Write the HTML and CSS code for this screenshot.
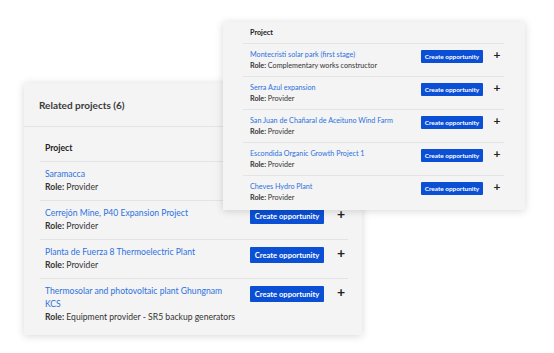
FILE: index.html
```html
<!DOCTYPE html>
<html lang="en">

<head>
  <meta charset="UTF-8" />
  <meta name="viewport" content="width=device-width, initial-scale=1.0" />
  <link rel="stylesheet" href="styles.css">
  <title>Related projects</title>
</head>

<body>
  <div class="canvas">

    <div class="card card-back">
      <div class="card-head">Related projects (6)</div>
      <div class="projects">
        <div class="projects-head">Project</div>

        <div class="project">
          <div class="project-info">
            <a class="project-name" href="#">Saramacca</a>
            <div class="project-role"><b>Role:</b> Provider</div>
          </div>
        </div>

        <div class="project">
          <div class="project-info">
            <a class="project-name" href="#">Cerrejón Mine, P40 Expansion Project</a>
            <div class="project-role"><b>Role:</b> Provider</div>
          </div>
          <button class="btn">Create opportunity</button>
          <span class="plus">+</span>
        </div>

        <div class="project">
          <div class="project-info">
            <a class="project-name" href="#">Planta de Fuerza 8 Thermoelectric Plant</a>
            <div class="project-role"><b>Role:</b> Provider</div>
          </div>
          <button class="btn">Create opportunity</button>
          <span class="plus">+</span>
        </div>

        <div class="project">
          <div class="project-info">
            <a class="project-name" href="#">Thermosolar and photovoltaic plant Ghungnam KCS</a>
            <div class="project-role"><b>Role:</b> Equipment provider - SR5 backup generators</div>
          </div>
          <button class="btn">Create opportunity</button>
          <span class="plus">+</span>
        </div>
      </div>
    </div>

    <div class="card card-front">
      <div class="projects">
        <div class="projects-head">Project</div>

        <div class="project">
          <div class="project-info">
            <a class="project-name" href="#">Montecristi solar park (first stage)</a>
            <div class="project-role"><b>Role:</b> Complementary works constructor</div>
          </div>
          <button class="btn">Create opportunity</button>
          <span class="plus">+</span>
        </div>

        <div class="project">
          <div class="project-info">
            <a class="project-name" href="#">Serra Azul expansion</a>
            <div class="project-role"><b>Role:</b> Provider</div>
          </div>
          <button class="btn">Create opportunity</button>
          <span class="plus">+</span>
        </div>

        <div class="project">
          <div class="project-info">
            <a class="project-name" href="#">San Juan de Chañaral de Aceituno Wind Farm</a>
            <div class="project-role"><b>Role:</b> Provider</div>
          </div>
          <button class="btn">Create opportunity</button>
          <span class="plus">+</span>
        </div>

        <div class="project">
          <div class="project-info">
            <a class="project-name" href="#">Escondida Organic Growth Project 1</a>
            <div class="project-role"><b>Role:</b> Provider</div>
          </div>
          <button class="btn">Create opportunity</button>
          <span class="plus">+</span>
        </div>

        <div class="project">
          <div class="project-info">
            <a class="project-name" href="#">Cheves Hydro Plant</a>
            <div class="project-role"><b>Role:</b> Provider</div>
          </div>
          <button class="btn">Create opportunity</button>
          <span class="plus">+</span>
        </div>
      </div>
    </div>

  </div>
</body>

</html>
```

FILE: styles.css
```css
* {
  box-sizing: border-box;
  padding: 0;
  margin: 0;
}

body {
  background-color: #fff;
  font-family: Lato, "Liberation Sans", sans-serif;
  color: #333;
}

.canvas {
  position: relative;
  width: 554px;
  height: 353px;
  overflow: hidden;
}

/* the two cards float on the canvas, one over the other */
.card {
  position: absolute;
  background-color: #f4f4f4;
  box-shadow: 0 1px 8px rgba(0, 0, 0, .16);
}

.card-back {
  left: 24px;
  top: 83px;
  width: 338px;
  height: 252px;
  font-size: 8.6px;
}

.card-front {
  left: 223px;
  top: 22px;
  width: 302px;
  height: 188px;
  font-size: 7.2px;
}

.card-head {
  height: 44px;
  display: flex;
  align-items: center;
  padding-left: 15px;
  font-size: 10px;
  font-weight: 700;
  color: #3a3a3a;
  border-bottom: 1px solid #e4e4e4;
}

.projects {
  display: flex;
  flex-direction: column;
  padding: 0 14px 0 16px;
}

.card-front .projects {
  padding: 0 21px 0 20px;
}

.projects-head {
  padding: 15px 5px 7px;
  line-height: 12px;
  font-weight: 700;
  color: #222;
  border-bottom: 1px solid #e4e4e4;
}

.card-front .projects-head {
  padding: 5px 7px;
  line-height: 11px;
}

.project {
  display: flex;
  align-items: flex-start;
  padding: 6px 2px 6px 5px;
  line-height: 13px;
  border-bottom: 1px solid #e4e4e4;
}

.project:last-child {
  border-bottom: none;
}

.card-front .project {
  padding: 5px 2px 5px 7px;
  line-height: 11px;
  height: 33px;
}

.project-info {
  flex: 1;
  display: flex;
  flex-direction: column;
}

.project-name {
  color: #2d72de;
  text-decoration: none;
}

.card-back .project-name {
  max-width: 182px;
}

.project-role b {
  font-weight: 700;
}

.btn {
  border: none;
  outline: none;
  cursor: pointer;
  background-color: #0b4fd4;
  color: #fff;
  font-family: inherit;
  font-size: 7.6px;
  font-weight: 700;
  width: 74px;
  height: 16px;
  margin-top: 1px;
  border-radius: 1px;
}

.card-front .btn {
  width: 62px;
  height: 13px;
  font-size: 6.4px;
}

.plus {
  width: 10px;
  margin-left: 12px;
  font-size: 14px;
  font-weight: 700;
  line-height: 14px;
  color: #222;
  text-align: center;
}

.card-front .plus {
  margin-left: 9px;
  font-size: 12px;
  line-height: 12px;
}
```
